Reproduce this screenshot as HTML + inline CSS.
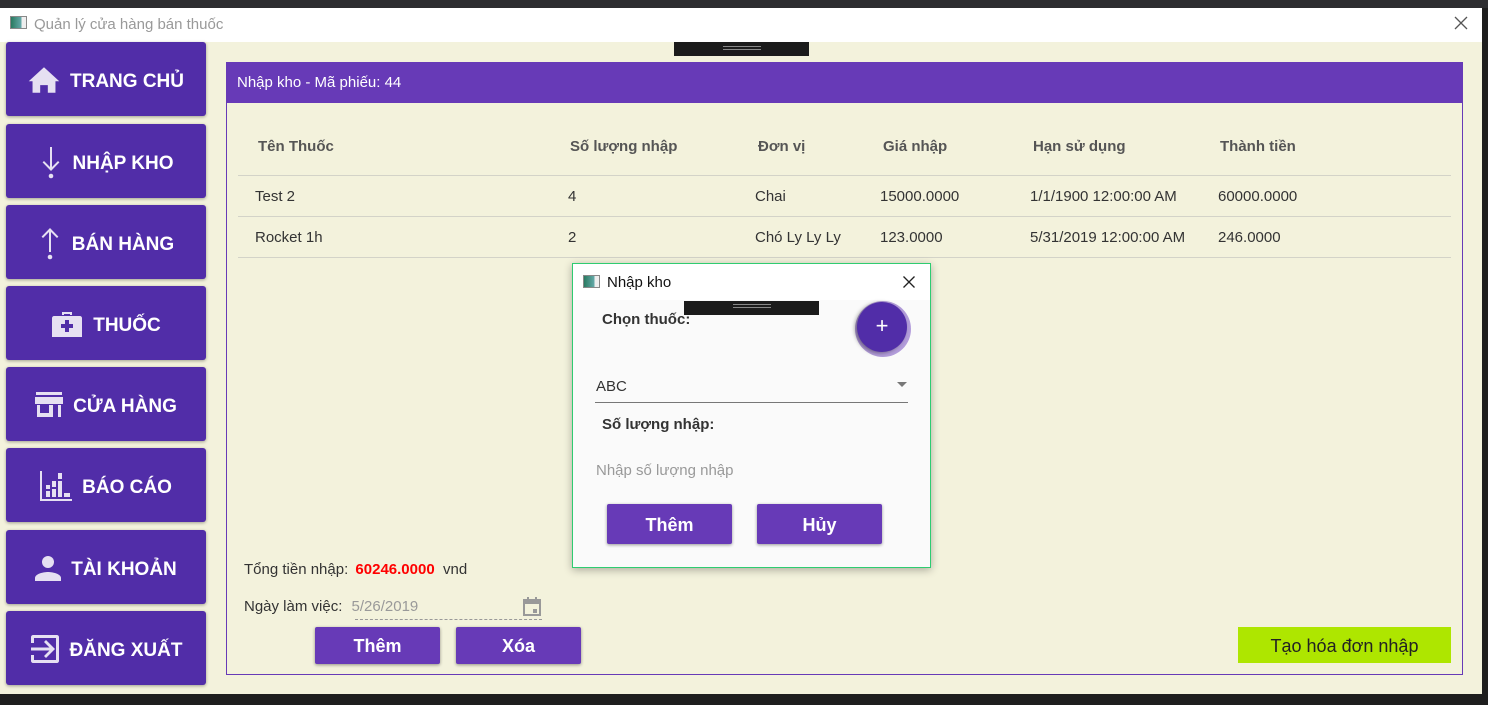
<!DOCTYPE html>
<html><head><meta charset="utf-8"><style>
*{margin:0;padding:0;box-sizing:border-box}
body{width:1488px;height:705px;background:#252526;position:relative;overflow:hidden;font-family:"Liberation Sans",sans-serif}
.a{position:absolute}
.win{left:0;top:8px;width:1482px;height:686px;background:#f3f2dc}
.tb{left:0;top:8px;width:1482px;height:34px;background:#fff;color:#999;font-size:15px;line-height:34px;padding-left:34px}
.nav{left:6px;width:200px;height:74px;background:#512da8;border-radius:3px;box-shadow:0 1px 3px rgba(0,0,0,.35);color:#fff;font-weight:bold;font-size:19px;display:flex;align-items:center;justify-content:center;gap:10px;padding-top:5px}
.nav svg{fill:#e6e0f2;margin-top:-4px}
.hd{font-size:15px;color:#555;font-weight:bold}
.cell{font-size:15px;color:#333}
.btn{background:#673ab7;color:#fff;font-weight:bold;font-size:18px;display:flex;align-items:center;justify-content:center;border-radius:2px;box-shadow:0 1px 3px rgba(0,0,0,.4)}
.line{height:1px;background:#d3d3c8}
</style></head><body>
<div class="a" style="left:0;top:0;width:1488px;height:8px;background:#2d2d30"></div>
<div class="a win"></div>
<div class="a tb">Quản lý cửa hàng bán thuốc</div>
<div class="a" style="left:10px;top:16px;width:17px;height:13px;border:1px solid #888;background:linear-gradient(90deg,#2a7a60,#6aa 70%,#eee 70%)"></div>
<svg class="a" style="left:1454px;top:16px" width="14" height="14" viewBox="0 0 14 14"><path d="M1 1L13 13M13 1L1 13" stroke="#555" stroke-width="1.3"/></svg>
<div class="a" style="left:674px;top:42px;width:135px;height:14px;background:#1b1b1b"><div style="margin:4px auto 0;width:38px;height:4px;border-top:1px solid #888;border-bottom:1px solid #888"></div></div>

<div class="a nav" style="top:42px"><svg width="32" height="28" viewBox="0 0 24 22"><path d="M12 1L0 12h3v9h6v-6h6v6h6v-9h3z"/></svg>TRANG CHỦ</div>
<div class="a nav" style="top:124px"><svg width="24" height="34" viewBox="0 0 24 34"><path d="M11 2h2v20l6-6 1.4 1.4L12 26 3.6 17.4 5 16l6 6z"/><circle cx="12" cy="31" r="2.3"/></svg>NHẬP KHO</div>
<div class="a nav" style="top:205px"><svg width="24" height="34" viewBox="0 0 24 34"><path d="M11 26h2V6l6 6 1.4-1.4L12 2 3.6 10.6 5 12l6-6z"/><circle cx="12" cy="31" r="2.3"/></svg>BÁN HÀNG</div>
<div class="a nav" style="top:286px"><svg width="32" height="30" viewBox="0 0 32 30"><path d="M11 6V3h10v3h-2V5h-6v1zM3 7h26c1 0 2 1 2 2v19H1V9c0-1 1-2 2-2z"/><path d="M14 11h4v4h4v4h-4v4h-4v-4h-4v-4h4z" fill="#512da8"/></svg>THUỐC</div>
<div class="a nav" style="top:367px"><svg width="28" height="26" viewBox="0 0 28 26"><path d="M1 0h26v3H1zM0 5h28l1 7H-1zM2 13h3v12H2zM23 13h3v12h-3zM5 21h13v4H5zM14 13h4v8h-4z"/></svg>CỬA HÀNG</div>
<div class="a nav" style="top:448px"><svg width="32" height="30" viewBox="0 0 32 30"><path d="M0 0h2v28h30v2H0zM6 14h4v4H6zM6 20h4v6H6zM12 10h4v6h-4zM12 18h4v8h-4zM18 2h4v6h-4zM18 10h4v16h-4zM24 22h6v4h-6z"/></svg>BÁO CÁO</div>
<div class="a nav" style="top:530px"><svg width="26" height="26" viewBox="0 0 26 26"><circle cx="13" cy="7" r="6"/><path d="M0 26v-3c0-4 8-6 13-6s13 2 13 6v3z"/></svg>TÀI KHOẢN</div>
<div class="a nav" style="top:611px"><svg width="30" height="30" viewBox="0 0 30 30"><path d="M3 1h24c1 0 2 1 2 2v24c0 1-1 2-2 2H3c-1 0-2-1-2-2v-6h3v5h22V4H4v5H1V3c0-1 1-2 2-2z"/><path d="M14 8l2-2 9 9-9 9-2-2 5.5-5.5H1v-3h18.5z"/></svg>ĐĂNG XUẤT</div>

<div class="a" style="left:226px;top:62px;width:1237px;height:613px;border:1px solid #673ab7"></div>
<div class="a" style="left:226px;top:62px;width:1237px;height:41px;background:#673ab7;color:#fff;font-size:15px;line-height:41px;padding-left:11px">Nhập kho - Mã phiếu: 44</div>

<div class="a hd" style="left:258px;top:138px">Tên Thuốc</div>
<div class="a hd" style="left:570px;top:138px">Số lượng nhập</div>
<div class="a hd" style="left:758px;top:138px">Đơn vị</div>
<div class="a hd" style="left:883px;top:138px">Giá nhập</div>
<div class="a hd" style="left:1033px;top:138px">Hạn sử dụng</div>
<div class="a hd" style="left:1220px;top:138px">Thành tiền</div>
<div class="a line" style="left:238px;top:175px;width:1213px"></div>
<div class="a cell" style="left:255px;top:188px">Test 2</div>
<div class="a cell" style="left:568px;top:188px">4</div>
<div class="a cell" style="left:755px;top:188px">Chai</div>
<div class="a cell" style="left:880px;top:188px">15000.0000</div>
<div class="a cell" style="left:1030px;top:188px">1/1/1900 12:00:00 AM</div>
<div class="a cell" style="left:1218px;top:188px">60000.0000</div>
<div class="a line" style="left:238px;top:216px;width:1213px"></div>
<div class="a cell" style="left:255px;top:229px">Rocket 1h</div>
<div class="a cell" style="left:568px;top:229px">2</div>
<div class="a cell" style="left:755px;top:229px">Chó Ly Ly Ly</div>
<div class="a cell" style="left:880px;top:229px">123.0000</div>
<div class="a cell" style="left:1030px;top:229px">5/31/2019 12:00:00 AM</div>
<div class="a cell" style="left:1218px;top:229px">246.0000</div>
<div class="a line" style="left:238px;top:257px;width:1213px"></div>

<div class="a" style="left:244px;top:561px;font-size:15px;color:#333">Tổng tiền nhập: <b style="color:#f00;margin-left:3px">60246.0000</b>&nbsp; vnd</div>
<div class="a" style="left:244px;top:598px;font-size:15px;color:#333">Ngày làm việc: <span style="color:#999;margin-left:5px">5/26/2019</span></div>
<div class="a" style="left:355px;top:619px;width:187px;border-top:1px dashed #999"></div>
<svg class="a" style="left:523px;top:597px" width="18" height="19" viewBox="0 0 18 19"><path d="M1 3h16v15H1z" fill="none" stroke="#999" stroke-width="2"/><path d="M1 3h16v4H1zM4 0h2v4H4zM12 0h2v4h-2zM10 12h4v4h-4z" fill="#999"/></svg>
<div class="a btn" style="left:315px;top:627px;width:125px;height:37px;padding-top:2px">Thêm</div>
<div class="a btn" style="left:456px;top:627px;width:125px;height:37px;padding-top:2px">Xóa</div>
<div class="a" style="left:1238px;top:627px;width:213px;height:36px;background:#aee600;color:#222;font-size:18px;display:flex;align-items:center;justify-content:center;padding-top:2px">Tạo hóa đơn nhập</div>

<div class="a" style="left:0;top:694px;width:1488px;height:11px;background:#1e1e1e"></div>
<div class="a" style="left:1482px;top:8px;width:6px;height:686px;background:#1e1e1e"></div>

<!-- dialog -->
<div class="a" style="left:572px;top:263px;width:359px;height:305px;background:#fafafa;border:1px solid #2ecc71;box-shadow:0 2px 8px rgba(0,0,0,.3)"></div>
<div class="a" style="left:573px;top:264px;width:357px;height:36px;background:#fff;font-size:15px;color:#111;line-height:38px;padding-left:34px">Nhập kho</div>
<div class="a" style="left:583px;top:275px;width:17px;height:13px;border:1px solid #888;background:linear-gradient(90deg,#2a7a60,#6aa 70%,#eee 70%)"></div>
<svg class="a" style="left:903px;top:276px" width="12" height="12" viewBox="0 0 12 12"><path d="M0.5 0.5L11.5 11.5M11.5 0.5L0.5 11.5" stroke="#222" stroke-width="1.3"/></svg>
<div class="a" style="left:684px;top:301px;width:135px;height:14px;background:#1b1b1b"><div style="margin:3px auto 0;width:38px;height:4px;border-top:1px solid #888;border-bottom:1px solid #888"></div></div>
<div class="a" style="left:602px;top:311px;font-size:15px;font-weight:bold;color:#333">Chọn thuốc:</div>
<div class="a" style="left:855px;top:301px;width:56px;height:56px;border-radius:50%;background:#b39ddb"></div>
<div class="a" style="left:857px;top:302px;width:50px;height:50px;border-radius:50%;background:#512da8;color:#fff;font-size:22px;text-align:center;line-height:48px;box-shadow:-2px 1px 4px rgba(0,0,0,.4)">+</div>
<div class="a" style="left:596px;top:378px;font-size:15px;color:#333">ABC</div>
<div class="a" style="left:897px;top:382px;width:0;height:0;border-left:5px solid transparent;border-right:5px solid transparent;border-top:5px solid #777"></div>
<div class="a" style="left:595px;top:402px;width:313px;height:1px;background:#777"></div>
<div class="a" style="left:602px;top:416px;font-size:15px;font-weight:bold;color:#333">Số lượng nhập:</div>
<div class="a" style="left:596px;top:462px;font-size:15px;color:#999">Nhập số lượng nhập</div>
<div class="a btn" style="left:607px;top:504px;width:125px;height:40px;padding-top:2px">Thêm</div>
<div class="a btn" style="left:757px;top:504px;width:125px;height:40px;padding-top:2px">Hủy</div>
</body></html>
